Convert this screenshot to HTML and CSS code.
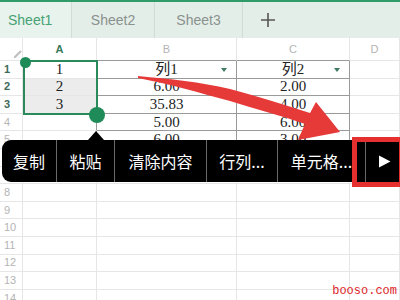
FILE: index.html
```html
<!DOCTYPE html>
<html>
<head>
<meta charset="utf-8">
<link rel="stylesheet" href="styles.css">
</head>
<body>
<div class="tabs">
  <div class="tab active">Sheet1</div>
  <div class="tab t2">Sheet2</div>
  <div class="tab t3">Sheet3</div>
  <div class="add"><svg width="16" height="16" viewBox="0 0 16 16"><path d="M8 1v14M1 8h14" stroke="#555" stroke-width="1.6"/></svg></div>
</div>
<div class="sheet">
  <div class="c corner"><svg class="sa" width="8" height="8" viewBox="0 0 8 8"><path d="M0 8L7 1" stroke="#bdbdbd" stroke-width="2"/></svg></div>
  <div class="c h hs">A</div><div class="c h hb">B</div><div class="c h hb">C</div><div class="c h">D</div>

  <div class="c n ns">1</div><div class="c">1</div><div class="c t">列1<span class="dd"></span></div><div class="c t">列2<span class="dd"></span></div><div class="c"></div>
  <div class="c n ns">2</div><div class="c sel">2</div><div class="c t">6.00</div><div class="c t">2.00</div><div class="c"></div>
  <div class="c n ns">3</div><div class="c sel">3</div><div class="c t">35.83</div><div class="c t">4.00</div><div class="c"></div>
  <div class="c n">4</div><div class="c tl"></div><div class="c t">5.00</div><div class="c t">6.00</div><div class="c"></div>
  <div class="c n">5</div><div class="c tl"></div><div class="c t">6.00</div><div class="c t">3.00</div><div class="c"></div>
  <div class="c n">6</div><div class="c"></div><div class="c"></div><div class="c"></div><div class="c"></div>
  <div class="c n">7</div><div class="c"></div><div class="c"></div><div class="c"></div><div class="c"></div>
  <div class="c n">8</div><div class="c"></div><div class="c"></div><div class="c"></div><div class="c"></div>
  <div class="c n">9</div><div class="c"></div><div class="c"></div><div class="c"></div><div class="c"></div>
  <div class="c n">10</div><div class="c"></div><div class="c"></div><div class="c"></div><div class="c"></div>
  <div class="c n">11</div><div class="c"></div><div class="c"></div><div class="c"></div><div class="c"></div>
  <div class="c n">12</div><div class="c"></div><div class="c"></div><div class="c"></div><div class="c"></div>
  <div class="c n">13</div><div class="c"></div><div class="c"></div><div class="c"></div><div class="c"></div>
  <div class="c n">14</div><div class="c"></div><div class="c"></div><div class="c"></div><div class="c"></div>
</div>

<div class="selbox"></div>
<div class="handle h1"></div>
<div class="handle h2"></div>

<svg class="arrow" width="400" height="300" viewBox="0 0 400 300">
  <path d="M138 76 C170 79 200 82 230 89 C260 97 285 105 310 113 L316 102 L340 132 L298 140 L305 124 C280 115 255 109 230 101 C200 93 170 84 138 78 Z" fill="#e63a39"/>
</svg>

<div class="menu">
  <div class="mi w1">复制</div>
  <div class="mi w2">粘贴</div>
  <div class="mi w3">清除内容</div>
  <div class="mi w4">行列...</div>
  <div class="mi w5">单元格...</div>
  <div class="mi w6"><svg width="13" height="13" viewBox="0 0 13 13"><path d="M1 0.5L12.5 6.5L1 12.5Z" fill="#fff"/></svg></div>
</div>
<div class="redframe"></div>
<div class="wm">booso.com</div>
</body>
</html>
```
FILE: styles.css
```css
* { box-sizing: border-box; margin: 0; padding: 0; }
body {
  width: 400px;
  height: 300px;
  overflow: hidden;
  background: #fff;
  position: relative;
  font-family: "Liberation Sans", Arial, sans-serif;
}
.tabs {
  height: 38px;
  border-top: 2px solid #2f9c6a;
  background: #e3eee8;
  display: flex;
}
.tab {
  display: flex;
  align-items: center;
  justify-content: center;
  font-size: 14px;
  color: #8b918e;
  border-right: 1px solid #d2dcd7;
}
.tab.active {
  width: 72px;
  justify-content: flex-start;
  padding-left: 8px;
  color: #46a173;
  background: #e8f3ed;
}
.tab.t2 { width: 83px; }
.tab.t3 { width: 88px; }
.add {
  width: 50px;
  display: flex;
  align-items: center;
  justify-content: center;
}
.sheet {
  display: grid;
  grid-template-columns: 23px 74px 140px 113px 50px;
  grid-template-rows: 23px repeat(14, 17.6px);
}
.c {
  border-right: 1px solid #e6e6e6;
  border-bottom: 1px solid #e6e6e6;
  display: flex;
  align-items: center;
  justify-content: center;
  font-family: "Liberation Serif", "Noto Sans CJK SC", serif;
  font-size: 15px;
  color: #222;
  line-height: 1;
  position: relative;
}
.corner { border-bottom-color: #e6e6e6; }
.sa { position: absolute; left: 14px; top: 12px; }
.h {
  font-family: "Liberation Sans", Arial, sans-serif;
  font-size: 11px;
  color: #b4b4b4;
}
.hs { color: #3a7a5a; font-weight: bold; }
.hb { border-bottom-color: #9a9a9a; }
.n {
  font-family: "Liberation Sans", Arial, sans-serif;
  font-size: 11px;
  color: #b4b4b4;
  justify-content: flex-start;
  padding-left: 4px;
}
.ns { color: #3d6a57; font-weight: bold; }
.sel { background: #ececec; }
.t { border-right-color: #9a9a9a; border-bottom-color: #9a9a9a; }
.tl { border-right-color: #9a9a9a; }
.dd {
  position: absolute;
  right: 9px;
  top: 7px;
  width: 0;
  height: 0;
  border-left: 3.5px solid transparent;
  border-right: 3.5px solid transparent;
  border-top: 4px solid #3f7a60;
}
.selbox {
  position: absolute;
  left: 23px;
  top: 60px;
  width: 75px;
  height: 55px;
  border: 2px solid #2b8a5c;
}
.handle {
  position: absolute;
  border-radius: 50%;
  background: #1f8b58;
}
.h1 { left: 20px; top: 57px; width: 11px; height: 11px; }
.h2 { left: 89px; top: 107px; width: 16px; height: 16px; }
.arrow { position: absolute; left: 0; top: 0; pointer-events: none; }
.menu {
  position: absolute;
  left: 2px;
  top: 140px;
  width: 398px;
  height: 42px;
  background: #000;
  border-radius: 9px 0 0 9px;
  display: flex;
}
.menu::before {
  content: "";
  position: absolute;
  left: 86px;
  top: -9px;
  border-left: 8px solid transparent;
  border-right: 8px solid transparent;
  border-bottom: 9px solid #000;
}
.mi {
  display: flex;
  align-items: center;
  justify-content: center;
  color: #fff;
  font-family: "Noto Sans CJK SC", sans-serif;
  font-size: 16px;
  border-right: 1px solid #6a6a6a;
}
.w1 { width: 55px; }
.w2 { width: 58px; }
.w3 { width: 92px; }
.w4 { width: 71px; }
.w5 { width: 88px; }
.w6 { flex: 1; border-right: none; padding-left: 2px; }
.redframe {
  position: absolute;
  left: 352px;
  top: 137px;
  width: 52px;
  height: 50px;
  border: 5px solid #e5302f;
}
.wm {
  position: absolute;
  right: 3px;
  bottom: 2px;
  font-family: "Liberation Mono", monospace;
  font-size: 12px;
  color: #e0262b;
}
```
